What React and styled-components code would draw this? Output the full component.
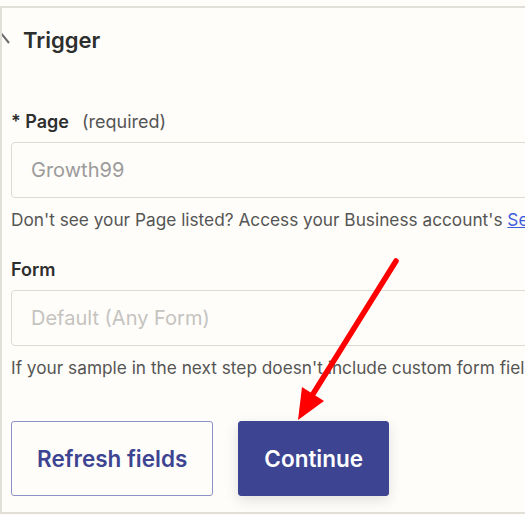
import React from "react";
import styled, { createGlobalStyle } from "styled-components";

const GlobalStyle = createGlobalStyle`
  html, body {
    margin: 0;
    padding: 0;
    background: #fffdf9;
    overflow: hidden;
  }
  body {
    font-family: Inter, "Noto Sans", sans-serif;
    color: #2d2e2e;
  }
`;

const Page = styled.div`
  position: relative;
  width: 525px;
  height: 515px;
  padding-top: 6px;
  box-sizing: border-box;
`;

const Panel = styled.section`
  height: 508px;
  box-sizing: border-box;
  border-top: 2px solid #e2dfd9;
  border-left: 2px solid #e2dfd9;
  border-bottom: 2px solid #e2dfd9;
  overflow: hidden;
`;

const Header = styled.div`
  display: flex;
  align-items: center;
  height: 64px;
`;

const Chevron = styled.svg`
  width: 20px;
  height: 20px;
  margin-left: -12px;
  margin-right: 13px;
  flex-shrink: 0;
  overflow: visible;
`;

const Title = styled.h2`
  margin: 0;
  font-size: 22px;
  font-weight: 600;
  color: #2d2e2e;
`;

const Body = styled.div`
  padding: 38px 0 0 9px;
`;

const Field = styled.div`
  margin-bottom: ${(p) => p.$gap || 0}px;
`;

const Label = styled.div`
  display: flex;
  gap: 13px;
  font-size: 18px;
  line-height: 24px;
  margin-bottom: 8px;
  white-space: nowrap;
`;

const LabelName = styled.span`
  font-weight: 600;
  color: #2d2e2e;
`;

const LabelNote = styled.span`
  color: #555;
`;

const Input = styled.div`
  height: 56px;
  box-sizing: border-box;
  width: 540px;
  border: 1px solid #dedbd5;
  border-radius: 4px;
  display: flex;
  align-items: center;
  padding-left: 19px;
  font-size: 20px;
  color: ${(p) => (p.$faint ? "#c4c3c0" : "#9b9b9b")};
  background: #fffdf9;
`;

const Help = styled.p`
  margin: 10px 0 0;
  font-size: 17.25px;
  line-height: 24px;
  color: #555;
  white-space: nowrap;
`;

const Link = styled.a`
  color: #3b5bdb;
  text-decoration: underline;
`;

const Actions = styled.div`
  display: flex;
  gap: 25px;
  margin-top: 41px;
`;

const Button = styled.button`
  height: 75px;
  box-sizing: border-box;
  padding: 0 25px;
  border-radius: 3px;
  font-family: Inter, "Noto Sans", sans-serif;
  font-size: 22.5px;
  font-weight: 600;
  cursor: pointer;
  border: 1px solid ${(p) => (p.$primary ? "#3d4592" : "#8c91c6")};
  background: ${(p) => (p.$primary ? "#3d4592" : "transparent")};
  color: ${(p) => (p.$primary ? "#ffffff" : "#3d4592")};
  box-shadow: ${(p) => (p.$primary ? "0 4px 14px rgba(0,0,0,0.12)" : "none")};
`;

const Arrow = styled.svg`
  position: absolute;
  left: 0;
  top: 0;
  width: 525px;
  height: 515px;
  pointer-events: none;
`;

export default function App() {
  return (
    <Page>
      <GlobalStyle />
      <Panel>
        <Header>
          <Chevron viewBox="0 0 20 20" fill="none">
            <path d="M1 13 L10 2 L19 13" stroke="#6b6b6b" strokeWidth="2" />
          </Chevron>
          <Title>Trigger</Title>
        </Header>
        <Body>
          <Field $gap={26}>
            <Label>
              <LabelName>* Page</LabelName>
              <LabelNote>(required)</LabelNote>
            </Label>
            <Input>Growth99</Input>
            <Help>
              Don't see your Page listed? Access your Business account's{" "}
              <Link href="#">Settings</Link>
            </Help>
          </Field>
          <Field>
            <Label>
              <LabelName>Form</LabelName>
            </Label>
            <Input $faint>Default (Any Form)</Input>
            <Help>
              If your sample in the next step doesn't include custom form fields
            </Help>
          </Field>
          <Actions>
            <Button>Refresh fields</Button>
            <Button $primary>Continue</Button>
          </Actions>
        </Body>
      </Panel>
      <Arrow viewBox="0 0 525 515">
        <line x1="396" y1="261" x2="313" y2="394" stroke="#ff0000" strokeWidth="5.5" strokeLinecap="round" />
        <polygon points="298,420 302,387 324,401" fill="#ff0000" />
      </Arrow>
    </Page>
  );
}
